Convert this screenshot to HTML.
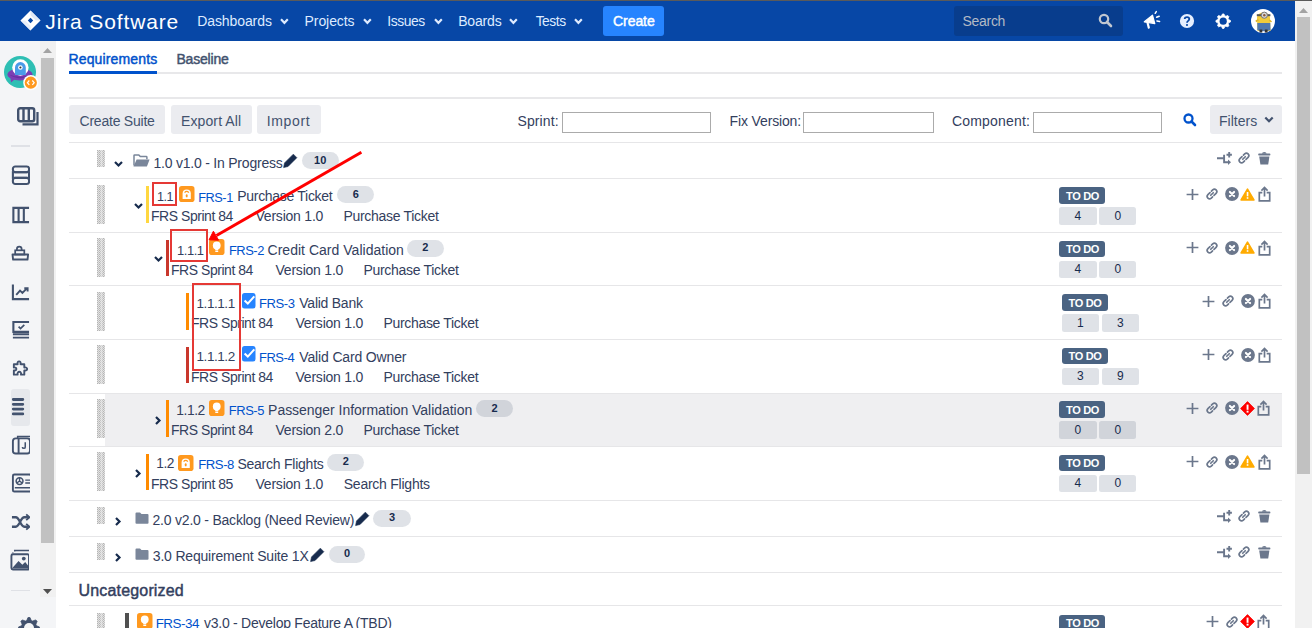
<!DOCTYPE html>
<html><head><meta charset="utf-8"><title>Requirements</title>
<style>
html,body{margin:0;padding:0;width:1312px;height:628px;overflow:hidden;background:#fff;position:relative}
.t{position:absolute;white-space:nowrap}
svg{overflow:visible}
</style></head><body>
<div style="position:absolute;left:0px;top:0px;width:1312px;height:1px;background:#5a5a5a;"></div><div style="position:absolute;left:0px;top:1px;width:1295px;height:40px;background:#0747a6;"></div><div style="position:absolute;left:1295px;top:1px;width:17px;height:627px;background:#f1f1f1;"></div><div style="position:absolute;left:1297px;top:17px;width:13px;height:457px;background:#c1c1c1;"></div><svg style="position:absolute;left:1298px;top:6px;" width="11" height="8" viewBox="0 0 11 8"><path d="M1 7 L5.5 2 L10 7 Z" fill="#a3a3a3"/></svg><div style="position:absolute;left:0px;top:41px;width:56px;height:587px;background:#f4f5f7;"></div><div style="position:absolute;left:40px;top:41px;width:16px;height:556px;background:#f1f1f1;"></div><div style="position:absolute;left:41px;top:58px;width:13px;height:485px;background:#c1c1c1;"></div><svg style="position:absolute;left:42px;top:46px;" width="11" height="8" viewBox="0 0 11 8"><path d="M1 7 L5.5 2 L10 7 Z" fill="#a3a3a3"/></svg><svg style="position:absolute;left:42px;top:588px;" width="11" height="8" viewBox="0 0 11 8"><path d="M1 1 L5.5 6 L10 1 Z" fill="#505050"/></svg><svg style="position:absolute;left:20px;top:10px;" width="21" height="21" viewBox="0 0 21 21"><path d="M10.5 0.5 L20.5 10.5 L10.5 20.5 L0.5 10.5 Z" fill="#fff"/><path d="M10.5 7.8 L13.2 10.5 L10.5 13.2 L7.8 10.5 Z" fill="#0747a6"/><path d="M10.5 0.5 L20.5 10.5 L15.8 10.5 L10.5 5.2 Z" fill="#dfe8f6"/><path d="M10.5 20.5 L0.5 10.5 L5.2 10.5 L10.5 15.8 Z" fill="#e8eef8"/></svg><svg style="position:absolute;left:279.6px;top:18px;" width="9" height="7" viewBox="0 0 9 7"><path d="M1 1.3 L4.4 4.8 L7.8 1.3" stroke="#deebff" stroke-width="2.2" fill="none"/></svg><svg style="position:absolute;left:362.9px;top:18px;" width="9" height="7" viewBox="0 0 9 7"><path d="M1 1.3 L4.4 4.8 L7.8 1.3" stroke="#deebff" stroke-width="2.2" fill="none"/></svg><svg style="position:absolute;left:433.5px;top:18px;" width="9" height="7" viewBox="0 0 9 7"><path d="M1 1.3 L4.4 4.8 L7.8 1.3" stroke="#deebff" stroke-width="2.2" fill="none"/></svg><svg style="position:absolute;left:509.2px;top:18px;" width="9" height="7" viewBox="0 0 9 7"><path d="M1 1.3 L4.4 4.8 L7.8 1.3" stroke="#deebff" stroke-width="2.2" fill="none"/></svg><svg style="position:absolute;left:574.2px;top:18px;" width="9" height="7" viewBox="0 0 9 7"><path d="M1 1.3 L4.4 4.8 L7.8 1.3" stroke="#deebff" stroke-width="2.2" fill="none"/></svg><div style="position:absolute;left:603px;top:6px;width:61px;height:30px;background:#2684ff;border-radius:3px"></div><div style="position:absolute;left:954px;top:6px;width:169px;height:30px;background:#083d8d;border-radius:3px"></div><svg style="position:absolute;left:1098px;top:13px;" width="15" height="15" viewBox="0 0 15 15"><circle cx="6" cy="6" r="4.2" stroke="#c1c7d0" stroke-width="2.2" fill="none"/><path d="M9 9 L13 13" stroke="#c1c7d0" stroke-width="2.6" stroke-linecap="round"/></svg><svg style="position:absolute;left:1142px;top:10px;" width="20" height="20" viewBox="0 0 20 20"><path d="M2.3 11.8 L10.5 5.2 L12.8 13.6 Z" fill="#fff" stroke="#fff" stroke-width="1.2" stroke-linejoin="round"/><path d="M5.6 13 L6.8 17.6" stroke="#fff" stroke-width="2.2" stroke-linecap="round"/><path d="M13.2 3.3 L14.3 1.6 M14.6 7.3 L17.2 6.2 M14.9 10.9 L17.6 11.4" stroke="#fff" stroke-width="1.5" stroke-linecap="round"/></svg><svg style="position:absolute;left:1179.2px;top:12.8px;" width="16" height="16" viewBox="0 0 16 16"><circle cx="8" cy="8" r="7.1" fill="#e6efff"/><path d="M5.7 6.1 C5.7 3.4 10.3 3.4 10.3 6.1 C10.3 7.9 8 7.8 8 9.7" stroke="#0747a6" stroke-width="1.8" fill="none"/><circle cx="8" cy="12" r="1.05" fill="#0747a6"/></svg><svg style="position:absolute;left:1215px;top:12.6px;" width="17" height="17" viewBox="0 0 17 17"><polygon points="15.46,7.48 15.46,8.92 13.56,9.83 13.14,10.84 13.84,12.83 12.83,13.84 10.84,13.14 9.83,13.56 8.92,15.46 7.48,15.46 6.57,13.56 5.56,13.14 3.57,13.84 2.56,12.83 3.26,10.84 2.84,9.83 0.94,8.92 0.94,7.48 2.84,6.57 3.26,5.56 2.56,3.57 3.57,2.56 5.56,3.26 6.57,2.84 7.48,0.94 8.92,0.94 9.83,2.84 10.84,3.26 12.83,2.56 13.84,3.57 13.14,5.56 13.56,6.57" fill="#fff" stroke="#fff" stroke-width="0.8" stroke-linejoin="round"/><circle cx="8.2" cy="8.2" r="3.6" fill="#0747a6"/></svg><svg style="position:absolute;left:1251px;top:8.8px;" width="25" height="25" viewBox="0 0 25 25"><circle cx="12" cy="12" r="12" fill="#fff"/><path d="M6.5 22 L6 9 C6 1.5 19 1.5 19 9 L19.5 22 Z" fill="#f2cb3a"/><path d="M6.3 14 H19.3 L19.5 21 Q12.8 23.5 6.3 21 Z" fill="#4f78b0"/><rect x="8.5" y="20.5" width="2.8" height="3" fill="#333"/><rect x="13.8" y="20.5" width="2.8" height="3" fill="#333"/><path d="M4.8 12.5 L7.5 10.5 M20.5 13 L18.3 11" stroke="#e0b52e" stroke-width="1.6"/><rect x="5.8" y="5.2" width="13.6" height="2" fill="#555"/><circle cx="13.3" cy="6.2" r="3.1" fill="#d8d8d8" stroke="#777" stroke-width="1"/><circle cx="13.3" cy="6.2" r="1.2" fill="#8a5a3a"/></svg><svg style="position:absolute;left:4px;top:56px;" width="33" height="33" viewBox="0 0 33 33"><circle cx="16" cy="16" r="16" fill="#2ebfb4"/><ellipse cx="16" cy="18.5" rx="12.5" ry="6" fill="#7b3fb5"/><path d="M6.5 21 L7 26.5 L10.5 23.5Z" fill="#7b3fb5"/><circle cx="16.4" cy="11.5" r="8.2" fill="#fff"/><path d="M11 19 V11.5 A5.4 5.4 0 0 1 21.8 11.5 V19 Z" fill="#4a9be8"/><circle cx="16.4" cy="11.5" r="2.3" fill="#fff"/><circle cx="16.4" cy="11.5" r="1.1" fill="#333"/><path d="M5 18.5 Q16 26 28 18.5 Q16 23 5 18.5Z" fill="#6a2fa0"/><circle cx="26.8" cy="26.7" r="7.6" fill="#fff"/><circle cx="26.8" cy="26.7" r="6.1" fill="#ff991f"/><path d="M25.3 24.5 L23.4 26.7 L25.3 28.9 M28.3 24.5 L30.2 26.7 L28.3 28.9" stroke="#fff" stroke-width="1.2" fill="none"/></svg><svg style="position:absolute;left:17px;top:107px;" width="23" height="19" viewBox="0 0 23 19"><rect x="1.2" y="1.2" width="16" height="13" rx="2" stroke="#42526e" stroke-width="2.4" fill="none"/><path d="M6.5 1 V14 M11.8 1 V14" stroke="#42526e" stroke-width="2.4"/><path d="M20.5 5 V17.3 H5.5" stroke="#42526e" stroke-width="2.2" fill="none"/></svg><div style="position:absolute;left:11px;top:145px;width:19px;height:2px;background:#dfe1e6;"></div><svg style="position:absolute;left:11px;top:165px;clip-path:inset(0 -2px 0 0);overflow:hidden;width:19px" width="20" height="21" viewBox="0 0 20 21"><rect x="2" y="1" width="17" height="6" rx="2.5" stroke="#42526e" stroke-width="2.2" fill="none"/><rect x="2" y="7" width="17" height="6" stroke="#42526e" stroke-width="2.2" fill="none"/><rect x="2" y="13" width="17" height="6.5" rx="2.5" stroke="#42526e" stroke-width="2.2" fill="none"/></svg><svg style="position:absolute;left:11px;top:206px;clip-path:inset(0 -2px 0 0);overflow:hidden;width:19px" width="20" height="18" viewBox="0 0 20 18"><path d="M19 1.5 H2.5 V16.5 H19" stroke="#42526e" stroke-width="2.2" fill="none"/><path d="M8 1.5 V16.5 M13.5 1.5 V16.5" stroke="#42526e" stroke-width="2.2"/></svg><svg style="position:absolute;left:11px;top:243px;clip-path:inset(0 -2px 0 0);overflow:hidden;width:19px" width="20" height="19" viewBox="0 0 20 19"><path d="M6.2 7 V5.8 A2.5 2.5 0 0 1 11.2 5.8 V7" stroke="#42526e" stroke-width="1.8" fill="none"/><rect x="4.4" y="7.2" width="9.6" height="4.4" stroke="#42526e" stroke-width="1.8" fill="none"/><path d="M1.6 11.6 H18 L17.4 16.9 H2.2 Z" stroke="#42526e" stroke-width="2" fill="none" stroke-linejoin="round"/></svg><svg style="position:absolute;left:11px;top:283px;clip-path:inset(0 -2px 0 0);overflow:hidden;width:19px" width="20" height="18" viewBox="0 0 20 18"><path d="M2 1 V16.5 H19" stroke="#42526e" stroke-width="2.2" fill="none"/><path d="M5.5 12 L9.5 7.5 L12 10 L17 5 M14 5 H17.5 V8.5" stroke="#42526e" stroke-width="2" fill="none"/></svg><svg style="position:absolute;left:11px;top:320px;clip-path:inset(0 -2px 0 0);overflow:hidden;width:19px" width="20" height="20" viewBox="0 0 20 20"><path d="M19 1.5 H2.5 V12 H19" stroke="#42526e" stroke-width="2.2" fill="none"/><path d="M8 6.5 L10 8.5 L14 4.5" stroke="#42526e" stroke-width="1.8" fill="none"/><path d="M2 14.5 H19 M2 18 H19" stroke="#42526e" stroke-width="2"/></svg><svg style="position:absolute;left:11px;top:358px;clip-path:inset(0 -2px 0 0);overflow:hidden;width:19px" width="20" height="20" viewBox="0 0 20 20"><path d="M3 6 H7 C6 2 11 2 10 6 H14 V9.5 C18 8.5 18 13.5 14 12.5 V17 H10.5 C11.5 13 6 13 7 17 H3 V12.5 C6.5 13.5 6.5 8.5 3 9.5 Z" stroke="#42526e" stroke-width="2" fill="none" stroke-linejoin="round"/></svg><div style="position:absolute;left:10.6px;top:389px;width:19px;height:37px;background:#e6e8ec;border-radius:3px"></div><svg style="position:absolute;left:12px;top:397px;" width="15" height="21" viewBox="0 0 15 21"><path d="M1.3 2.5 H10.8 M1.3 7.3 H10.8 M1.3 12.1 H10.8 M1.3 16.9 H10.8" stroke="#42526e" stroke-width="2.8" stroke-linecap="round"/></svg><svg style="position:absolute;left:11px;top:434px;clip-path:inset(0 -2px 0 0);overflow:hidden;width:19px" width="20" height="22" viewBox="0 0 20 22"><rect x="2" y="4" width="18" height="16" rx="3" stroke="#42526e" stroke-width="2" fill="none"/><path d="M7 4 V2 H20" stroke="#42526e" stroke-width="1.6" fill="none"/><path d="M8 4 V20" stroke="#42526e" stroke-width="2"/><path d="M15 8 V13 C15 15 12 15 12 13" stroke="#42526e" stroke-width="1.6" fill="none"/></svg><svg style="position:absolute;left:11px;top:472px;clip-path:inset(0 -2px 0 0);overflow:hidden;width:19px" width="20" height="22" viewBox="0 0 20 22"><rect x="2" y="2" width="19" height="18" rx="1.5" stroke="#42526e" stroke-width="2" fill="none"/><circle cx="9" cy="9" r="3.6" stroke="#42526e" stroke-width="1.6" fill="none"/><path d="M9 5.5 V9 L6 11 M9 9 L12 11" stroke="#42526e" stroke-width="1.4" fill="none"/><path d="M4 16 H20" stroke="#42526e" stroke-width="1.6"/><path d="M15 8 H20 M15 11 H20" stroke="#42526e" stroke-width="1.4"/></svg><svg style="position:absolute;left:11px;top:512px;clip-path:inset(0 -2px 0 0);overflow:hidden;width:19px" width="20" height="20" viewBox="0 0 20 20"><path d="M1 5 H5 C9 5 10 15 14 15 H19 M1 15 H5 C9 15 10 5 14 5 H19" stroke="#42526e" stroke-width="2.4" fill="none"/><path d="M16 2 L19.5 5 L16 8 M16 12 L19.5 15 L16 18" stroke="#42526e" stroke-width="2" fill="none"/></svg><svg style="position:absolute;left:10px;top:548px;clip-path:inset(0 -2px 0 0);overflow:hidden;width:19px" width="20" height="24" viewBox="0 0 20 24"><path d="M5 3 V2 H20 M3 5 V4" stroke="#42526e" stroke-width="1.6" fill="none"/><rect x="1.5" y="6" width="18.5" height="16" rx="1.5" stroke="#42526e" stroke-width="2" fill="none"/><path d="M2 21 L9 13 L13 17 L16 14 L20 19 V21 Z" fill="#42526e"/><circle cx="14.5" cy="10.5" r="2" fill="#42526e"/></svg><div style="position:absolute;left:11px;top:590px;width:19px;height:1px;background:#dfe1e6;"></div><svg style="position:absolute;left:16.5px;top:616px;" width="24" height="24" viewBox="0 0 24 24"><polygon points="22.45,10.97 22.45,13.03 19.46,14.26 18.88,15.68 20.12,18.66 18.66,20.12 15.68,18.88 14.26,19.46 13.03,22.45 10.97,22.45 9.74,19.46 8.32,18.88 5.34,20.12 3.88,18.66 5.12,15.68 4.54,14.26 1.55,13.03 1.55,10.97 4.54,9.74 5.12,8.32 3.88,5.34 5.34,3.88 8.32,5.12 9.74,4.54 10.97,1.55 13.03,1.55 14.26,4.54 15.68,5.12 18.66,3.88 20.12,5.34 18.88,8.32 19.46,9.74" fill="#42526e" stroke="#42526e" stroke-width="0.8" stroke-linejoin="round"/><circle cx="12" cy="12" r="5" fill="#f4f5f7"/></svg><div style="position:absolute;left:69px;top:72px;width:1213px;height:2px;background:#e8e8ea;"></div><div style="position:absolute;left:69px;top:71px;width:88px;height:3px;background:#0052cc;"></div><div style="position:absolute;left:69px;top:97px;width:1213px;height:2px;background:#e8e8ea;"></div><div style="position:absolute;left:69px;top:105px;width:96px;height:29px;background:#ebecf0;border-radius:3px"></div><div style="position:absolute;left:171px;top:105px;width:81px;height:29px;background:#ebecf0;border-radius:3px"></div><div style="position:absolute;left:257px;top:105px;width:64px;height:29px;background:#ebecf0;border-radius:3px"></div><div style="position:absolute;left:561.5px;top:111.5px;width:149.5px;height:21.5px;background:#fff;border:1px solid #ababab;box-sizing:border-box"></div><div style="position:absolute;left:803.3px;top:111.5px;width:130.5px;height:21.5px;background:#fff;border:1px solid #ababab;box-sizing:border-box"></div><div style="position:absolute;left:1032.8px;top:111.5px;width:129.5px;height:21.5px;background:#fff;border:1px solid #ababab;box-sizing:border-box"></div><svg style="position:absolute;left:1182px;top:113px;" width="15" height="13" viewBox="0 0 15 13"><circle cx="6.5" cy="5.5" r="4" stroke="#0052cc" stroke-width="2.3" fill="none"/><path d="M9.5 8.5 L13 12" stroke="#0052cc" stroke-width="2.6" stroke-linecap="round"/></svg><div style="position:absolute;left:1210px;top:105px;width:72px;height:29px;background:#ebecf0;border-radius:3px"></div><svg style="position:absolute;left:1264px;top:116px;" width="10" height="8" viewBox="0 0 10 8"><path d="M1.3 1.5 L5 5.2 L8.7 1.5" stroke="#42526e" stroke-width="2.2" fill="none"/></svg><div style="position:absolute;left:69px;top:142px;width:1213px;height:1px;background:#e6e6e8;"></div><svg style="position:absolute;left:97px;top:149.5px;" width="8" height="17" viewBox="0 0 8 17"><defs><pattern id="dp" width="2" height="2" patternUnits="userSpaceOnUse"><rect width="2" height="2" fill="#e2e2e2"/><rect width="1" height="1" fill="#b4b4b4"/><rect x="1" y="1" width="1" height="1" fill="#c4c4c4"/></pattern></defs><rect width="8" height="17" fill="url(#dp)"/><rect x="4" width="0.6" height="17" fill="#f0f0f0"/></svg><svg style="position:absolute;left:113.8px;top:161.0px;" width="9" height="6" viewBox="0 0 9 6"><path d="M1 1 L4.5 4.5 L8 1" stroke="#172b4d" stroke-width="2.2" fill="none"/></svg><svg style="position:absolute;left:133.2px;top:153.5px;" width="17" height="13" viewBox="0 0 17 13"><path d="M1 11.5 V1.6 Q1 1 1.6 1 H5.8 L7.3 2.6 H13.2 Q13.9 2.6 13.9 3.3 V5.2" stroke="#7a869a" stroke-width="1.5" fill="none"/><path d="M3.6 5.6 H16.6 L13.9 12.4 H0.5 Z" fill="#7a869a"/></svg><svg style="position:absolute;left:283.2px;top:154.0px;" width="15" height="14" viewBox="0 0 15 14"><path d="M0.6 13.6 L1.5 8.96 L10.33 0.13 L13.87 3.67 L5.04 12.5 Z" fill="#172b4d" stroke="#172b4d" stroke-width="0.6" stroke-linejoin="round"/></svg><div style="position:absolute;left:301.7px;top:152.0px;width:37px;height:17px;background:rgba(9,30,66,0.13);border-radius:8.5px"></div><div style="position:absolute;left:301.7px;top:151.5px;width:37px;height:17px;line-height:17px;text-align:center;font-family:'Liberation Sans', sans-serif;font-size:11px;font-weight:700;color:#172b4d;white-space:nowrap">10</div><svg style="position:absolute;left:1217px;top:152.2px;" width="15" height="13" viewBox="0 0 15 13"><path d="M0 6.3 H7.2 M7.1 2.8 V10.2 H12" stroke="#6b778c" stroke-width="1.9" fill="none"/><path d="M11 7.4 L14 10.2 L11 13 Z" fill="#6b778c"/><path d="M12.2 0 V5.4 M9.5 2.7 H14.9" stroke="#6b778c" stroke-width="1.9"/></svg><svg style="position:absolute;left:1237px;top:151.2px;" width="14" height="14" viewBox="0 0 14 14"><g transform="rotate(-45 7 7)" fill="none" stroke="#6b778c" stroke-width="1.65" stroke-linecap="round"><path d="M6.6 4.6 H3.6 A2.4 2.4 0 0 0 3.6 9.4 H5.4"/><path d="M7.4 9.4 H10.4 A2.4 2.4 0 0 0 10.4 4.6 H8.6"/><path d="M5.2 7 H8.8"/></g></svg><svg style="position:absolute;left:1257.8px;top:152.2px;" width="13" height="13" viewBox="0 0 13 13"><rect x="0.2" y="1.6" width="12.2" height="2" rx="0.8" fill="#6b778c"/><path d="M4 1.8 Q4 0 6.3 0 Q8.6 0 8.6 1.8 Z" fill="#6b778c"/><path d="M1.2 4.4 H11.4 L10.2 12.4 H2.4 Z" fill="#6b778c"/></svg><div style="position:absolute;left:69px;top:178px;width:1213px;height:1px;background:#e6e6e8;"></div><svg style="position:absolute;left:97px;top:184.5px;" width="8" height="39" viewBox="0 0 8 39"><defs><pattern id="dp" width="2" height="2" patternUnits="userSpaceOnUse"><rect width="2" height="2" fill="#e2e2e2"/><rect width="1" height="1" fill="#b4b4b4"/><rect x="1" y="1" width="1" height="1" fill="#c4c4c4"/></pattern></defs><rect width="8" height="39" fill="url(#dp)"/><rect x="4" width="0.6" height="39" fill="#f0f0f0"/></svg><svg style="position:absolute;left:133.5px;top:202.5px;" width="9" height="6" viewBox="0 0 9 6"><path d="M1 1 L4.5 4.5 L8 1" stroke="#172b4d" stroke-width="2.2" fill="none"/></svg><div style="position:absolute;left:145.6px;top:186px;width:3.4px;height:36.5px;background:#ffd740;"></div><svg style="position:absolute;left:178.9px;top:185.5px;" width="15.5" height="16" viewBox="0 0 15.5 16"><rect x="0" y="0" width="15.5" height="16" rx="2.8" fill="#ff991f"/><path d="M3.6 13 V7.5 A4.1 4.1 0 0 1 11.8 7.5 V13 Z" fill="#fff"/><path d="M5.6 6.6 Q7.7 4.3 9.8 6.6" stroke="#ff991f" stroke-width="1.3" fill="none"/><rect x="6.8" y="8.3" width="1.8" height="3" rx="0.9" fill="#ff991f"/></svg><div style="position:absolute;left:337.2px;top:186.3px;width:37px;height:17px;background:rgba(9,30,66,0.13);border-radius:8.5px"></div><div style="position:absolute;left:337.2px;top:185.8px;width:37px;height:17px;line-height:17px;text-align:center;font-family:'Liberation Sans', sans-serif;font-size:11px;font-weight:700;color:#172b4d;white-space:nowrap">6</div><div style="position:absolute;left:1059.2px;top:187.4px;width:46px;height:16.5px;background:#4a6382;border-radius:3px"></div><div style="position:absolute;left:1059px;top:207px;width:37.5px;height:17.5px;background:rgba(9,30,66,0.13);border-radius:2.5px"></div><div style="position:absolute;left:1099.3px;top:207px;width:37.2px;height:17.5px;background:rgba(9,30,66,0.13);border-radius:2.5px"></div><div style="position:absolute;left:1059px;top:207.5px;width:37.5px;height:17.5px;line-height:17.5px;text-align:center;font-family:'Liberation Sans', sans-serif;font-size:12px;font-weight:400;color:#172b4d;white-space:nowrap">4</div><div style="position:absolute;left:1099.3px;top:207.5px;width:37.2px;height:17.5px;line-height:17.5px;text-align:center;font-family:'Liberation Sans', sans-serif;font-size:12px;font-weight:400;color:#172b4d;white-space:nowrap">0</div><svg style="position:absolute;left:1185.7px;top:187.7px;" width="13" height="13" viewBox="0 0 13 13"><path d="M6.5 1 V12 M0.6 6.5 H12.4" stroke="#6b778c" stroke-width="1.7"/></svg><svg style="position:absolute;left:1204.9px;top:187.2px;" width="14" height="14" viewBox="0 0 14 14"><g transform="rotate(-45 7 7)" fill="none" stroke="#6b778c" stroke-width="1.65" stroke-linecap="round"><path d="M6.6 4.6 H3.6 A2.4 2.4 0 0 0 3.6 9.4 H5.4"/><path d="M7.4 9.4 H10.4 A2.4 2.4 0 0 0 10.4 4.6 H8.6"/><path d="M5.2 7 H8.8"/></g></svg><svg style="position:absolute;left:1224.8px;top:187.2px;" width="14" height="14" viewBox="0 0 14 14"><circle cx="7" cy="7" r="6.9" fill="#6b778c"/><path d="M4.9 4.9 L9.1 9.1 M9.1 4.9 L4.9 9.1" stroke="#fff" stroke-width="2.1" stroke-linecap="round"/></svg><svg style="position:absolute;left:1240.2px;top:187.7px;" width="15" height="13" viewBox="0 0 15 13"><path d="M7.5 1.2 L13.9 12 H1.1 Z" fill="#ffab00" stroke="#ffab00" stroke-width="1.6" stroke-linejoin="round"/><rect x="6.75" y="4" width="1.6" height="4.3" fill="#fff"/><rect x="6.75" y="9.2" width="1.6" height="1.6" fill="#fff"/></svg><svg style="position:absolute;left:1257.5px;top:186.2px;" width="13" height="16" viewBox="0 0 13 16"><path d="M4.3 6.6 H1.3 V14.8 H11.7 V6.6 H8.7" stroke="#6b778c" stroke-width="1.7" fill="none"/><path d="M6.5 10.6 V1.8 M3.4 4.6 L6.5 1.5 L9.6 4.6" stroke="#6b778c" stroke-width="1.7" fill="none"/></svg><div style="position:absolute;left:69px;top:232px;width:1213px;height:1px;background:#e6e6e8;"></div><svg style="position:absolute;left:97px;top:238.0px;" width="8" height="39" viewBox="0 0 8 39"><defs><pattern id="dp" width="2" height="2" patternUnits="userSpaceOnUse"><rect width="2" height="2" fill="#e2e2e2"/><rect width="1" height="1" fill="#b4b4b4"/><rect x="1" y="1" width="1" height="1" fill="#c4c4c4"/></pattern></defs><rect width="8" height="39" fill="url(#dp)"/><rect x="4" width="0.6" height="39" fill="#f0f0f0"/></svg><svg style="position:absolute;left:153.5px;top:256.0px;" width="9" height="6" viewBox="0 0 9 6"><path d="M1 1 L4.5 4.5 L8 1" stroke="#172b4d" stroke-width="2.2" fill="none"/></svg><div style="position:absolute;left:165.6px;top:239.5px;width:3.4px;height:36.5px;background:#c9372c;"></div><svg style="position:absolute;left:209.3px;top:239.0px;" width="15.5" height="16" viewBox="0 0 15.5 16"><rect x="0" y="0" width="15.5" height="16" rx="2.8" fill="#ff991f"/><circle cx="7.75" cy="6.4" r="3.9" fill="#fff"/><path d="M5.9 8.6 H9.6 L9.1 11.4 H6.4 Z" fill="#fff"/><rect x="6.3" y="11.9" width="2.9" height="1.1" fill="#fff"/></svg><div style="position:absolute;left:406.9px;top:239.8px;width:37px;height:17px;background:rgba(9,30,66,0.13);border-radius:8.5px"></div><div style="position:absolute;left:406.9px;top:239.3px;width:37px;height:17px;line-height:17px;text-align:center;font-family:'Liberation Sans', sans-serif;font-size:11px;font-weight:700;color:#172b4d;white-space:nowrap">2</div><div style="position:absolute;left:1059.2px;top:240.9px;width:46px;height:16.5px;background:#4a6382;border-radius:3px"></div><div style="position:absolute;left:1059px;top:260.5px;width:37.5px;height:17.5px;background:rgba(9,30,66,0.13);border-radius:2.5px"></div><div style="position:absolute;left:1099.3px;top:260.5px;width:37.2px;height:17.5px;background:rgba(9,30,66,0.13);border-radius:2.5px"></div><div style="position:absolute;left:1059px;top:261.0px;width:37.5px;height:17.5px;line-height:17.5px;text-align:center;font-family:'Liberation Sans', sans-serif;font-size:12px;font-weight:400;color:#172b4d;white-space:nowrap">4</div><div style="position:absolute;left:1099.3px;top:261.0px;width:37.2px;height:17.5px;line-height:17.5px;text-align:center;font-family:'Liberation Sans', sans-serif;font-size:12px;font-weight:400;color:#172b4d;white-space:nowrap">0</div><svg style="position:absolute;left:1185.7px;top:241.2px;" width="13" height="13" viewBox="0 0 13 13"><path d="M6.5 1 V12 M0.6 6.5 H12.4" stroke="#6b778c" stroke-width="1.7"/></svg><svg style="position:absolute;left:1204.9px;top:240.7px;" width="14" height="14" viewBox="0 0 14 14"><g transform="rotate(-45 7 7)" fill="none" stroke="#6b778c" stroke-width="1.65" stroke-linecap="round"><path d="M6.6 4.6 H3.6 A2.4 2.4 0 0 0 3.6 9.4 H5.4"/><path d="M7.4 9.4 H10.4 A2.4 2.4 0 0 0 10.4 4.6 H8.6"/><path d="M5.2 7 H8.8"/></g></svg><svg style="position:absolute;left:1224.8px;top:240.7px;" width="14" height="14" viewBox="0 0 14 14"><circle cx="7" cy="7" r="6.9" fill="#6b778c"/><path d="M4.9 4.9 L9.1 9.1 M9.1 4.9 L4.9 9.1" stroke="#fff" stroke-width="2.1" stroke-linecap="round"/></svg><svg style="position:absolute;left:1240.2px;top:241.2px;" width="15" height="13" viewBox="0 0 15 13"><path d="M7.5 1.2 L13.9 12 H1.1 Z" fill="#ffab00" stroke="#ffab00" stroke-width="1.6" stroke-linejoin="round"/><rect x="6.75" y="4" width="1.6" height="4.3" fill="#fff"/><rect x="6.75" y="9.2" width="1.6" height="1.6" fill="#fff"/></svg><svg style="position:absolute;left:1257.5px;top:239.7px;" width="13" height="16" viewBox="0 0 13 16"><path d="M4.3 6.6 H1.3 V14.8 H11.7 V6.6 H8.7" stroke="#6b778c" stroke-width="1.7" fill="none"/><path d="M6.5 10.6 V1.8 M3.4 4.6 L6.5 1.5 L9.6 4.6" stroke="#6b778c" stroke-width="1.7" fill="none"/></svg><div style="position:absolute;left:69px;top:285px;width:1213px;height:1px;background:#e6e6e8;"></div><svg style="position:absolute;left:97px;top:291.5px;" width="8" height="39" viewBox="0 0 8 39"><defs><pattern id="dp" width="2" height="2" patternUnits="userSpaceOnUse"><rect width="2" height="2" fill="#e2e2e2"/><rect width="1" height="1" fill="#b4b4b4"/><rect x="1" y="1" width="1" height="1" fill="#c4c4c4"/></pattern></defs><rect width="8" height="39" fill="url(#dp)"/><rect x="4" width="0.6" height="39" fill="#f0f0f0"/></svg><div style="position:absolute;left:185.6px;top:293px;width:3.4px;height:36.5px;background:#ff8b00;"></div><svg style="position:absolute;left:241.7px;top:292.7px;" width="14" height="15.5" viewBox="0 0 14 15.5"><rect x="0" y="0" width="13.5" height="15.4" rx="2.5" fill="#2684ff"/><path d="M2.6 7.6 L5.8 10.6 L12.3 3.4" stroke="#fff" stroke-width="2.1" fill="none"/></svg><div style="position:absolute;left:1061.7px;top:294.4px;width:46px;height:16.5px;background:#4a6382;border-radius:3px"></div><div style="position:absolute;left:1061.5px;top:314px;width:37.5px;height:17.5px;background:rgba(9,30,66,0.13);border-radius:2.5px"></div><div style="position:absolute;left:1101.8px;top:314px;width:37.2px;height:17.5px;background:rgba(9,30,66,0.13);border-radius:2.5px"></div><div style="position:absolute;left:1061.5px;top:314.5px;width:37.5px;height:17.5px;line-height:17.5px;text-align:center;font-family:'Liberation Sans', sans-serif;font-size:12px;font-weight:400;color:#172b4d;white-space:nowrap">1</div><div style="position:absolute;left:1101.8px;top:314.5px;width:37.2px;height:17.5px;line-height:17.5px;text-align:center;font-family:'Liberation Sans', sans-serif;font-size:12px;font-weight:400;color:#172b4d;white-space:nowrap">3</div><svg style="position:absolute;left:1201.7px;top:294.7px;" width="13" height="13" viewBox="0 0 13 13"><path d="M6.5 1 V12 M0.6 6.5 H12.4" stroke="#6b778c" stroke-width="1.7"/></svg><svg style="position:absolute;left:1220.8px;top:294.2px;" width="14" height="14" viewBox="0 0 14 14"><g transform="rotate(-45 7 7)" fill="none" stroke="#6b778c" stroke-width="1.65" stroke-linecap="round"><path d="M6.6 4.6 H3.6 A2.4 2.4 0 0 0 3.6 9.4 H5.4"/><path d="M7.4 9.4 H10.4 A2.4 2.4 0 0 0 10.4 4.6 H8.6"/><path d="M5.2 7 H8.8"/></g></svg><svg style="position:absolute;left:1241px;top:294.2px;" width="14" height="14" viewBox="0 0 14 14"><circle cx="7" cy="7" r="6.9" fill="#6b778c"/><path d="M4.9 4.9 L9.1 9.1 M9.1 4.9 L4.9 9.1" stroke="#fff" stroke-width="2.1" stroke-linecap="round"/></svg><svg style="position:absolute;left:1257.5px;top:293.2px;" width="13" height="16" viewBox="0 0 13 16"><path d="M4.3 6.6 H1.3 V14.8 H11.7 V6.6 H8.7" stroke="#6b778c" stroke-width="1.7" fill="none"/><path d="M6.5 10.6 V1.8 M3.4 4.6 L6.5 1.5 L9.6 4.6" stroke="#6b778c" stroke-width="1.7" fill="none"/></svg><div style="position:absolute;left:69px;top:339px;width:1213px;height:1px;background:#e6e6e8;"></div><svg style="position:absolute;left:97px;top:345.0px;" width="8" height="39" viewBox="0 0 8 39"><defs><pattern id="dp" width="2" height="2" patternUnits="userSpaceOnUse"><rect width="2" height="2" fill="#e2e2e2"/><rect width="1" height="1" fill="#b4b4b4"/><rect x="1" y="1" width="1" height="1" fill="#c4c4c4"/></pattern></defs><rect width="8" height="39" fill="url(#dp)"/><rect x="4" width="0.6" height="39" fill="#f0f0f0"/></svg><div style="position:absolute;left:185.6px;top:346.5px;width:3.4px;height:36.5px;background:#c9372c;"></div><svg style="position:absolute;left:241.7px;top:346.2px;" width="14" height="15.5" viewBox="0 0 14 15.5"><rect x="0" y="0" width="13.5" height="15.4" rx="2.5" fill="#2684ff"/><path d="M2.6 7.6 L5.8 10.6 L12.3 3.4" stroke="#fff" stroke-width="2.1" fill="none"/></svg><div style="position:absolute;left:1061.7px;top:347.9px;width:46px;height:16.5px;background:#4a6382;border-radius:3px"></div><div style="position:absolute;left:1061.5px;top:367.5px;width:37.5px;height:17.5px;background:rgba(9,30,66,0.13);border-radius:2.5px"></div><div style="position:absolute;left:1101.8px;top:367.5px;width:37.2px;height:17.5px;background:rgba(9,30,66,0.13);border-radius:2.5px"></div><div style="position:absolute;left:1061.5px;top:368.0px;width:37.5px;height:17.5px;line-height:17.5px;text-align:center;font-family:'Liberation Sans', sans-serif;font-size:12px;font-weight:400;color:#172b4d;white-space:nowrap">3</div><div style="position:absolute;left:1101.8px;top:368.0px;width:37.2px;height:17.5px;line-height:17.5px;text-align:center;font-family:'Liberation Sans', sans-serif;font-size:12px;font-weight:400;color:#172b4d;white-space:nowrap">9</div><svg style="position:absolute;left:1201.7px;top:348.2px;" width="13" height="13" viewBox="0 0 13 13"><path d="M6.5 1 V12 M0.6 6.5 H12.4" stroke="#6b778c" stroke-width="1.7"/></svg><svg style="position:absolute;left:1220.8px;top:347.7px;" width="14" height="14" viewBox="0 0 14 14"><g transform="rotate(-45 7 7)" fill="none" stroke="#6b778c" stroke-width="1.65" stroke-linecap="round"><path d="M6.6 4.6 H3.6 A2.4 2.4 0 0 0 3.6 9.4 H5.4"/><path d="M7.4 9.4 H10.4 A2.4 2.4 0 0 0 10.4 4.6 H8.6"/><path d="M5.2 7 H8.8"/></g></svg><svg style="position:absolute;left:1241px;top:347.7px;" width="14" height="14" viewBox="0 0 14 14"><circle cx="7" cy="7" r="6.9" fill="#6b778c"/><path d="M4.9 4.9 L9.1 9.1 M9.1 4.9 L4.9 9.1" stroke="#fff" stroke-width="2.1" stroke-linecap="round"/></svg><svg style="position:absolute;left:1257.5px;top:346.7px;" width="13" height="16" viewBox="0 0 13 16"><path d="M4.3 6.6 H1.3 V14.8 H11.7 V6.6 H8.7" stroke="#6b778c" stroke-width="1.7" fill="none"/><path d="M6.5 10.6 V1.8 M3.4 4.6 L6.5 1.5 L9.6 4.6" stroke="#6b778c" stroke-width="1.7" fill="none"/></svg><div style="position:absolute;left:69px;top:393px;width:1213px;height:1px;background:#e6e6e8;"></div><div style="position:absolute;left:105px;top:394px;width:1177px;height:52px;background:#efeff1;"></div><svg style="position:absolute;left:97px;top:398.5px;" width="8" height="39" viewBox="0 0 8 39"><defs><pattern id="dp" width="2" height="2" patternUnits="userSpaceOnUse"><rect width="2" height="2" fill="#e2e2e2"/><rect width="1" height="1" fill="#b4b4b4"/><rect x="1" y="1" width="1" height="1" fill="#c4c4c4"/></pattern></defs><rect width="8" height="39" fill="url(#dp)"/><rect x="4" width="0.6" height="39" fill="#f0f0f0"/></svg><svg style="position:absolute;left:154.8px;top:415.6px;" width="6" height="9" viewBox="0 0 6 9"><path d="M1 1 L4.5 4.5 L1 8" stroke="#172b4d" stroke-width="2.2" fill="none"/></svg><div style="position:absolute;left:165.6px;top:400px;width:3.4px;height:36.5px;background:#ff8b00;"></div><svg style="position:absolute;left:209px;top:400px;" width="15.5" height="16" viewBox="0 0 15.5 16"><rect x="0" y="0" width="15.5" height="16" rx="2.8" fill="#ff991f"/><circle cx="7.75" cy="6.4" r="3.9" fill="#fff"/><path d="M5.9 8.6 H9.6 L9.1 11.4 H6.4 Z" fill="#fff"/><rect x="6.3" y="11.9" width="2.9" height="1.1" fill="#fff"/></svg><div style="position:absolute;left:476px;top:400.3px;width:37px;height:17px;background:rgba(9,30,66,0.13);border-radius:8.5px"></div><div style="position:absolute;left:476px;top:399.8px;width:37px;height:17px;line-height:17px;text-align:center;font-family:'Liberation Sans', sans-serif;font-size:11px;font-weight:700;color:#172b4d;white-space:nowrap">2</div><div style="position:absolute;left:1059.2px;top:401.4px;width:46px;height:16.5px;background:#4a6382;border-radius:3px"></div><div style="position:absolute;left:1059px;top:421px;width:37.5px;height:17.5px;background:rgba(9,30,66,0.13);border-radius:2.5px"></div><div style="position:absolute;left:1099.3px;top:421px;width:37.2px;height:17.5px;background:rgba(9,30,66,0.13);border-radius:2.5px"></div><div style="position:absolute;left:1059px;top:421.5px;width:37.5px;height:17.5px;line-height:17.5px;text-align:center;font-family:'Liberation Sans', sans-serif;font-size:12px;font-weight:400;color:#172b4d;white-space:nowrap">0</div><div style="position:absolute;left:1099.3px;top:421.5px;width:37.2px;height:17.5px;line-height:17.5px;text-align:center;font-family:'Liberation Sans', sans-serif;font-size:12px;font-weight:400;color:#172b4d;white-space:nowrap">0</div><svg style="position:absolute;left:1185.7px;top:401.7px;" width="13" height="13" viewBox="0 0 13 13"><path d="M6.5 1 V12 M0.6 6.5 H12.4" stroke="#6b778c" stroke-width="1.7"/></svg><svg style="position:absolute;left:1205px;top:401.2px;" width="14" height="14" viewBox="0 0 14 14"><g transform="rotate(-45 7 7)" fill="none" stroke="#6b778c" stroke-width="1.65" stroke-linecap="round"><path d="M6.6 4.6 H3.6 A2.4 2.4 0 0 0 3.6 9.4 H5.4"/><path d="M7.4 9.4 H10.4 A2.4 2.4 0 0 0 10.4 4.6 H8.6"/><path d="M5.2 7 H8.8"/></g></svg><svg style="position:absolute;left:1224.9px;top:401.2px;" width="14" height="14" viewBox="0 0 14 14"><circle cx="7" cy="7" r="6.9" fill="#6b778c"/><path d="M4.9 4.9 L9.1 9.1 M9.1 4.9 L4.9 9.1" stroke="#fff" stroke-width="2.1" stroke-linecap="round"/></svg><svg style="position:absolute;left:1240.2px;top:400.7px;" width="15" height="15" viewBox="0 0 15 15"><path d="M7.5 0.6 L14.4 7.5 L7.5 14.4 L0.6 7.5 Z" fill="#ff0000" stroke="#ff0000" stroke-width="0.8" stroke-linejoin="round"/><rect x="6.6" y="3.6" width="1.9" height="5.2" fill="#fff"/><rect x="6.6" y="9.7" width="1.9" height="1.9" fill="#fff"/></svg><svg style="position:absolute;left:1257.1px;top:400.2px;" width="13" height="16" viewBox="0 0 13 16"><path d="M4.3 6.6 H1.3 V14.8 H11.7 V6.6 H8.7" stroke="#6b778c" stroke-width="1.7" fill="none"/><path d="M6.5 10.6 V1.8 M3.4 4.6 L6.5 1.5 L9.6 4.6" stroke="#6b778c" stroke-width="1.7" fill="none"/></svg><div style="position:absolute;left:69px;top:446px;width:1213px;height:1px;background:#e6e6e8;"></div><svg style="position:absolute;left:97px;top:452.0px;" width="8" height="39" viewBox="0 0 8 39"><defs><pattern id="dp" width="2" height="2" patternUnits="userSpaceOnUse"><rect width="2" height="2" fill="#e2e2e2"/><rect width="1" height="1" fill="#b4b4b4"/><rect x="1" y="1" width="1" height="1" fill="#c4c4c4"/></pattern></defs><rect width="8" height="39" fill="url(#dp)"/><rect x="4" width="0.6" height="39" fill="#f0f0f0"/></svg><svg style="position:absolute;left:134.8px;top:469.1px;" width="6" height="9" viewBox="0 0 6 9"><path d="M1 1 L4.5 4.5 L1 8" stroke="#172b4d" stroke-width="2.2" fill="none"/></svg><div style="position:absolute;left:145.6px;top:453.5px;width:3.4px;height:36.5px;background:#ff8b00;"></div><svg style="position:absolute;left:178.4px;top:454.7px;" width="15.5" height="16" viewBox="0 0 15.5 16"><rect x="0" y="0" width="15.5" height="16" rx="2.8" fill="#ff991f"/><path d="M3.6 13 V7.5 A4.1 4.1 0 0 1 11.8 7.5 V13 Z" fill="#fff"/><path d="M5.6 6.6 Q7.7 4.3 9.8 6.6" stroke="#ff991f" stroke-width="1.3" fill="none"/><rect x="6.8" y="8.3" width="1.8" height="3" rx="0.9" fill="#ff991f"/></svg><div style="position:absolute;left:327.4px;top:453.8px;width:37px;height:17px;background:rgba(9,30,66,0.13);border-radius:8.5px"></div><div style="position:absolute;left:327.4px;top:453.3px;width:37px;height:17px;line-height:17px;text-align:center;font-family:'Liberation Sans', sans-serif;font-size:11px;font-weight:700;color:#172b4d;white-space:nowrap">2</div><div style="position:absolute;left:1059.2px;top:454.9px;width:46px;height:16.5px;background:#4a6382;border-radius:3px"></div><div style="position:absolute;left:1059px;top:474.5px;width:37.5px;height:17.5px;background:rgba(9,30,66,0.13);border-radius:2.5px"></div><div style="position:absolute;left:1099.3px;top:474.5px;width:37.2px;height:17.5px;background:rgba(9,30,66,0.13);border-radius:2.5px"></div><div style="position:absolute;left:1059px;top:475.0px;width:37.5px;height:17.5px;line-height:17.5px;text-align:center;font-family:'Liberation Sans', sans-serif;font-size:12px;font-weight:400;color:#172b4d;white-space:nowrap">4</div><div style="position:absolute;left:1099.3px;top:475.0px;width:37.2px;height:17.5px;line-height:17.5px;text-align:center;font-family:'Liberation Sans', sans-serif;font-size:12px;font-weight:400;color:#172b4d;white-space:nowrap">0</div><svg style="position:absolute;left:1185.7px;top:455.2px;" width="13" height="13" viewBox="0 0 13 13"><path d="M6.5 1 V12 M0.6 6.5 H12.4" stroke="#6b778c" stroke-width="1.7"/></svg><svg style="position:absolute;left:1204.9px;top:454.7px;" width="14" height="14" viewBox="0 0 14 14"><g transform="rotate(-45 7 7)" fill="none" stroke="#6b778c" stroke-width="1.65" stroke-linecap="round"><path d="M6.6 4.6 H3.6 A2.4 2.4 0 0 0 3.6 9.4 H5.4"/><path d="M7.4 9.4 H10.4 A2.4 2.4 0 0 0 10.4 4.6 H8.6"/><path d="M5.2 7 H8.8"/></g></svg><svg style="position:absolute;left:1224.8px;top:454.7px;" width="14" height="14" viewBox="0 0 14 14"><circle cx="7" cy="7" r="6.9" fill="#6b778c"/><path d="M4.9 4.9 L9.1 9.1 M9.1 4.9 L4.9 9.1" stroke="#fff" stroke-width="2.1" stroke-linecap="round"/></svg><svg style="position:absolute;left:1240.2px;top:455.2px;" width="15" height="13" viewBox="0 0 15 13"><path d="M7.5 1.2 L13.9 12 H1.1 Z" fill="#ffab00" stroke="#ffab00" stroke-width="1.6" stroke-linejoin="round"/><rect x="6.75" y="4" width="1.6" height="4.3" fill="#fff"/><rect x="6.75" y="9.2" width="1.6" height="1.6" fill="#fff"/></svg><svg style="position:absolute;left:1257.5px;top:453.7px;" width="13" height="16" viewBox="0 0 13 16"><path d="M4.3 6.6 H1.3 V14.8 H11.7 V6.6 H8.7" stroke="#6b778c" stroke-width="1.7" fill="none"/><path d="M6.5 10.6 V1.8 M3.4 4.6 L6.5 1.5 L9.6 4.6" stroke="#6b778c" stroke-width="1.7" fill="none"/></svg><div style="position:absolute;left:69px;top:500px;width:1213px;height:1px;background:#e6e6e8;"></div><svg style="position:absolute;left:97px;top:507px;" width="8" height="17" viewBox="0 0 8 17"><defs><pattern id="dp" width="2" height="2" patternUnits="userSpaceOnUse"><rect width="2" height="2" fill="#e2e2e2"/><rect width="1" height="1" fill="#b4b4b4"/><rect x="1" y="1" width="1" height="1" fill="#c4c4c4"/></pattern></defs><rect width="8" height="17" fill="url(#dp)"/><rect x="4" width="0.6" height="17" fill="#f0f0f0"/></svg><svg style="position:absolute;left:114.5px;top:517px;" width="6" height="9" viewBox="0 0 6 9"><path d="M1 1 L4.5 4.5 L1 8" stroke="#172b4d" stroke-width="2.2" fill="none"/></svg><svg style="position:absolute;left:134.6px;top:512px;" width="14" height="12" viewBox="0 0 14 12"><path d="M0.5 1.5 Q0.5 0.5 1.5 0.5 H5 L6.5 2 H12.5 Q13.5 2 13.5 3 V11 Q13.5 11.8 12.5 11.8 H1.5 Q0.5 11.8 0.5 11 Z" fill="#7a869a"/></svg><svg style="position:absolute;left:355px;top:511.5px;" width="15" height="14" viewBox="0 0 15 14"><path d="M0.6 13.6 L1.5 8.96 L10.33 0.13 L13.87 3.67 L5.04 12.5 Z" fill="#172b4d" stroke="#172b4d" stroke-width="0.6" stroke-linejoin="round"/></svg><div style="position:absolute;left:373.4px;top:509.5px;width:37.3px;height:17px;background:rgba(9,30,66,0.13);border-radius:8.5px"></div><div style="position:absolute;left:373.4px;top:509.0px;width:37.3px;height:17px;line-height:17px;text-align:center;font-family:'Liberation Sans', sans-serif;font-size:11px;font-weight:700;color:#172b4d;white-space:nowrap">3</div><svg style="position:absolute;left:1217px;top:509.7px;" width="15" height="13" viewBox="0 0 15 13"><path d="M0 6.3 H7.2 M7.1 2.8 V10.2 H12" stroke="#6b778c" stroke-width="1.9" fill="none"/><path d="M11 7.4 L14 10.2 L11 13 Z" fill="#6b778c"/><path d="M12.2 0 V5.4 M9.5 2.7 H14.9" stroke="#6b778c" stroke-width="1.9"/></svg><svg style="position:absolute;left:1237px;top:508.70000000000005px;" width="14" height="14" viewBox="0 0 14 14"><g transform="rotate(-45 7 7)" fill="none" stroke="#6b778c" stroke-width="1.65" stroke-linecap="round"><path d="M6.6 4.6 H3.6 A2.4 2.4 0 0 0 3.6 9.4 H5.4"/><path d="M7.4 9.4 H10.4 A2.4 2.4 0 0 0 10.4 4.6 H8.6"/><path d="M5.2 7 H8.8"/></g></svg><svg style="position:absolute;left:1257.8px;top:509.7px;" width="13" height="13" viewBox="0 0 13 13"><rect x="0.2" y="1.6" width="12.2" height="2" rx="0.8" fill="#6b778c"/><path d="M4 1.8 Q4 0 6.3 0 Q8.6 0 8.6 1.8 Z" fill="#6b778c"/><path d="M1.2 4.4 H11.4 L10.2 12.4 H2.4 Z" fill="#6b778c"/></svg><div style="position:absolute;left:69px;top:536px;width:1213px;height:1px;background:#e6e6e8;"></div><svg style="position:absolute;left:97px;top:543px;" width="8" height="17" viewBox="0 0 8 17"><defs><pattern id="dp" width="2" height="2" patternUnits="userSpaceOnUse"><rect width="2" height="2" fill="#e2e2e2"/><rect width="1" height="1" fill="#b4b4b4"/><rect x="1" y="1" width="1" height="1" fill="#c4c4c4"/></pattern></defs><rect width="8" height="17" fill="url(#dp)"/><rect x="4" width="0.6" height="17" fill="#f0f0f0"/></svg><svg style="position:absolute;left:114.5px;top:553px;" width="6" height="9" viewBox="0 0 6 9"><path d="M1 1 L4.5 4.5 L1 8" stroke="#172b4d" stroke-width="2.2" fill="none"/></svg><svg style="position:absolute;left:134.6px;top:548px;" width="14" height="12" viewBox="0 0 14 12"><path d="M0.5 1.5 Q0.5 0.5 1.5 0.5 H5 L6.5 2 H12.5 Q13.5 2 13.5 3 V11 Q13.5 11.8 12.5 11.8 H1.5 Q0.5 11.8 0.5 11 Z" fill="#7a869a"/></svg><svg style="position:absolute;left:309.7px;top:547.5px;" width="15" height="14" viewBox="0 0 15 14"><path d="M0.6 13.6 L1.5 8.96 L10.33 0.13 L13.87 3.67 L5.04 12.5 Z" fill="#172b4d" stroke="#172b4d" stroke-width="0.6" stroke-linejoin="round"/></svg><div style="position:absolute;left:329px;top:545.5px;width:36.2px;height:17px;background:rgba(9,30,66,0.13);border-radius:8.5px"></div><div style="position:absolute;left:329px;top:545.0px;width:36.2px;height:17px;line-height:17px;text-align:center;font-family:'Liberation Sans', sans-serif;font-size:11px;font-weight:700;color:#172b4d;white-space:nowrap">0</div><svg style="position:absolute;left:1217px;top:545.7px;" width="15" height="13" viewBox="0 0 15 13"><path d="M0 6.3 H7.2 M7.1 2.8 V10.2 H12" stroke="#6b778c" stroke-width="1.9" fill="none"/><path d="M11 7.4 L14 10.2 L11 13 Z" fill="#6b778c"/><path d="M12.2 0 V5.4 M9.5 2.7 H14.9" stroke="#6b778c" stroke-width="1.9"/></svg><svg style="position:absolute;left:1237px;top:544.7px;" width="14" height="14" viewBox="0 0 14 14"><g transform="rotate(-45 7 7)" fill="none" stroke="#6b778c" stroke-width="1.65" stroke-linecap="round"><path d="M6.6 4.6 H3.6 A2.4 2.4 0 0 0 3.6 9.4 H5.4"/><path d="M7.4 9.4 H10.4 A2.4 2.4 0 0 0 10.4 4.6 H8.6"/><path d="M5.2 7 H8.8"/></g></svg><svg style="position:absolute;left:1257.8px;top:545.7px;" width="13" height="13" viewBox="0 0 13 13"><rect x="0.2" y="1.6" width="12.2" height="2" rx="0.8" fill="#6b778c"/><path d="M4 1.8 Q4 0 6.3 0 Q8.6 0 8.6 1.8 Z" fill="#6b778c"/><path d="M1.2 4.4 H11.4 L10.2 12.4 H2.4 Z" fill="#6b778c"/></svg><div style="position:absolute;left:69px;top:572px;width:1213px;height:1px;background:#e6e6e8;"></div><div style="position:absolute;left:69px;top:605px;width:1213px;height:1px;background:#e6e6e8;"></div><svg style="position:absolute;left:97px;top:612.5px;" width="8" height="20" viewBox="0 0 8 20"><defs><pattern id="dp" width="2" height="2" patternUnits="userSpaceOnUse"><rect width="2" height="2" fill="#e2e2e2"/><rect width="1" height="1" fill="#b4b4b4"/><rect x="1" y="1" width="1" height="1" fill="#c4c4c4"/></pattern></defs><rect width="8" height="20" fill="url(#dp)"/><rect x="4" width="0.6" height="20" fill="#f0f0f0"/></svg><div style="position:absolute;left:125.3px;top:612.5px;width:3.3px;height:20px;background:#505050;"></div><svg style="position:absolute;left:137px;top:612.5px;" width="15.5" height="16" viewBox="0 0 15.5 16"><rect x="0" y="0" width="15.5" height="16" rx="2.8" fill="#ff991f"/><circle cx="7.75" cy="6.4" r="3.9" fill="#fff"/><path d="M5.9 8.6 H9.6 L9.1 11.4 H6.4 Z" fill="#fff"/><rect x="6.3" y="11.9" width="2.9" height="1.1" fill="#fff"/></svg><div style="position:absolute;left:1059.2px;top:614.5px;width:46px;height:16.5px;background:#4a6382;border-radius:3px"></div><svg style="position:absolute;left:1205.5px;top:615.0px;" width="13" height="13" viewBox="0 0 13 13"><path d="M6.5 1 V12 M0.6 6.5 H12.4" stroke="#6b778c" stroke-width="1.7"/></svg><svg style="position:absolute;left:1224.5px;top:614.5px;" width="14" height="14" viewBox="0 0 14 14"><g transform="rotate(-45 7 7)" fill="none" stroke="#6b778c" stroke-width="1.65" stroke-linecap="round"><path d="M6.6 4.6 H3.6 A2.4 2.4 0 0 0 3.6 9.4 H5.4"/><path d="M7.4 9.4 H10.4 A2.4 2.4 0 0 0 10.4 4.6 H8.6"/><path d="M5.2 7 H8.8"/></g></svg><svg style="position:absolute;left:1240.1px;top:614.0px;" width="15" height="15" viewBox="0 0 15 15"><path d="M7.5 0.6 L14.4 7.5 L7.5 14.4 L0.6 7.5 Z" fill="#ff0000" stroke="#ff0000" stroke-width="0.8" stroke-linejoin="round"/><rect x="6.6" y="3.6" width="1.9" height="5.2" fill="#fff"/><rect x="6.6" y="9.7" width="1.9" height="1.9" fill="#fff"/></svg><svg style="position:absolute;left:1257.2px;top:613.5px;" width="13" height="16" viewBox="0 0 13 16"><path d="M4.3 6.6 H1.3 V14.8 H11.7 V6.6 H8.7" stroke="#6b778c" stroke-width="1.7" fill="none"/><path d="M6.5 10.6 V1.8 M3.4 4.6 L6.5 1.5 L9.6 4.6" stroke="#6b778c" stroke-width="1.7" fill="none"/></svg>
<div class="t" style="left:45.25px;top:8.52px;font-size:21px;line-height:25px;font-weight:400;color:#ffffff;letter-spacing:0.875px;font-family:'Liberation Sans', sans-serif">Jira Software</div><div class="t" style="left:197.20px;top:13.25px;font-size:14.0px;line-height:17px;font-weight:400;color:#deebff;letter-spacing:-0.089px;font-family:'Liberation Sans', sans-serif">Dashboards</div><div class="t" style="left:304.60px;top:13.25px;font-size:14.0px;line-height:17px;font-weight:400;color:#deebff;letter-spacing:-0.086px;font-family:'Liberation Sans', sans-serif">Projects</div><div class="t" style="left:387.26px;top:13.29px;font-size:13.89px;line-height:17px;font-weight:400;color:#deebff;letter-spacing:-0.450px;font-family:'Liberation Sans', sans-serif">Issues</div><div class="t" style="left:458.20px;top:13.25px;font-size:14.0px;line-height:17px;font-weight:400;color:#deebff;letter-spacing:-0.180px;font-family:'Liberation Sans', sans-serif">Boards</div><div class="t" style="left:535.65px;top:13.31px;font-size:13.83px;line-height:17px;font-weight:400;color:#deebff;letter-spacing:-0.450px;font-family:'Liberation Sans', sans-serif">Tests</div><div class="t" style="left:613.05px;top:12.95px;font-size:14.0px;line-height:17px;font-weight:400;color:#ffffff;letter-spacing:-0.070px;font-family:'Liberation Sans', sans-serif;-webkit-text-stroke:0.45px #ffffff">Create</div><div class="t" style="left:962.55px;top:12.95px;font-size:14.0px;line-height:17px;font-weight:400;color:#b3bac5;letter-spacing:-0.310px;font-family:'Liberation Sans', sans-serif">Search</div><div class="t" style="left:68.50px;top:50.85px;font-size:14.0px;line-height:17px;font-weight:400;color:#0052cc;letter-spacing:0.141px;font-family:'Liberation Sans', sans-serif;-webkit-text-stroke:0.45px #0052cc">Requirements</div><div class="t" style="left:176.40px;top:50.85px;font-size:14.0px;line-height:17px;font-weight:400;color:#42526e;letter-spacing:-0.179px;font-family:'Liberation Sans', sans-serif;-webkit-text-stroke:0.45px #42526e">Baseline</div><div class="t" style="left:79.55px;top:112.65px;font-size:14.0px;line-height:17px;font-weight:400;color:#42526e;letter-spacing:-0.227px;font-family:'Liberation Sans', sans-serif">Create Suite</div><div class="t" style="left:181.00px;top:112.65px;font-size:14.0px;line-height:17px;font-weight:400;color:#42526e;letter-spacing:0.111px;font-family:'Liberation Sans', sans-serif">Export All</div><div class="t" style="left:266.75px;top:112.65px;font-size:14.0px;line-height:17px;font-weight:400;color:#42526e;letter-spacing:0.640px;font-family:'Liberation Sans', sans-serif">Import</div><div class="t" style="left:517.45px;top:112.65px;font-size:14.0px;line-height:17px;font-weight:400;color:#33405e;letter-spacing:0.133px;font-family:'Liberation Sans', sans-serif">Sprint:</div><div class="t" style="left:729.60px;top:112.65px;font-size:14.0px;line-height:17px;font-weight:400;color:#33405e;letter-spacing:-0.145px;font-family:'Liberation Sans', sans-serif">Fix Version:</div><div class="t" style="left:952.05px;top:112.65px;font-size:14.0px;line-height:17px;font-weight:400;color:#33405e;letter-spacing:0.172px;font-family:'Liberation Sans', sans-serif">Component:</div><div class="t" style="left:1219.00px;top:112.65px;font-size:14.0px;line-height:17px;font-weight:400;color:#42526e;letter-spacing:0.025px;font-family:'Liberation Sans', sans-serif">Filters</div><div class="t" style="left:153.40px;top:154.95px;font-size:14.0px;line-height:17px;font-weight:400;color:#33405e;letter-spacing:-0.212px;font-family:'Liberation Sans', sans-serif">1.0 v1.0 - In Progress</div><div class="t" style="left:157.00px;top:189.73px;font-size:12.6px;line-height:15px;font-weight:400;color:#33405e;letter-spacing:-0.537px;font-family:'Liberation Sans', sans-serif">1.1</div><div class="t" style="left:198.29px;top:189.69px;font-size:12.72px;line-height:15px;font-weight:400;color:#0052cc;letter-spacing:-0.450px;font-family:'Liberation Sans', sans-serif">FRS-1</div><div class="t" style="left:237.30px;top:188.25px;font-size:14.0px;line-height:17px;font-weight:400;color:#33405e;letter-spacing:-0.304px;font-family:'Liberation Sans', sans-serif">Purchase Ticket</div><div class="t" style="left:151.00px;top:208.46px;font-size:13.98px;line-height:17px;font-weight:400;color:#33405e;letter-spacing:-0.450px;font-family:'Liberation Sans', sans-serif">FRS Sprint 84</div><div class="t" style="left:255.50px;top:208.45px;font-size:14.0px;line-height:17px;font-weight:400;color:#33405e;letter-spacing:-0.220px;font-family:'Liberation Sans', sans-serif">Version 1.0</div><div class="t" style="left:343.50px;top:208.45px;font-size:14.0px;line-height:17px;font-weight:400;color:#33405e;letter-spacing:-0.304px;font-family:'Liberation Sans', sans-serif">Purchase Ticket</div><div class="t" style="left:1066.00px;top:189.69px;font-size:11.0px;line-height:13px;font-weight:700;color:#ffffff;letter-spacing:-0.312px;font-family:'Liberation Sans', sans-serif">TO DO</div><div class="t" style="left:177.07px;top:242.61px;font-size:12.96px;line-height:16px;font-weight:400;color:#33405e;letter-spacing:-0.450px;font-family:'Liberation Sans', sans-serif">1.1.1</div><div class="t" style="left:228.88px;top:242.62px;font-size:12.93px;line-height:16px;font-weight:400;color:#0052cc;letter-spacing:-0.450px;font-family:'Liberation Sans', sans-serif">FRS-2</div><div class="t" style="left:267.55px;top:241.75px;font-size:14.0px;line-height:17px;font-weight:400;color:#33405e;letter-spacing:0.021px;font-family:'Liberation Sans', sans-serif">Credit Card Validation</div><div class="t" style="left:171.00px;top:261.96px;font-size:13.98px;line-height:17px;font-weight:400;color:#33405e;letter-spacing:-0.450px;font-family:'Liberation Sans', sans-serif">FRS Sprint 84</div><div class="t" style="left:275.50px;top:261.95px;font-size:14.0px;line-height:17px;font-weight:400;color:#33405e;letter-spacing:-0.220px;font-family:'Liberation Sans', sans-serif">Version 1.0</div><div class="t" style="left:363.50px;top:261.95px;font-size:14.0px;line-height:17px;font-weight:400;color:#33405e;letter-spacing:-0.304px;font-family:'Liberation Sans', sans-serif">Purchase Ticket</div><div class="t" style="left:1066.00px;top:243.19px;font-size:11.0px;line-height:13px;font-weight:700;color:#ffffff;letter-spacing:-0.312px;font-family:'Liberation Sans', sans-serif">TO DO</div><div class="t" style="left:196.53px;top:295.91px;font-size:13.54px;line-height:16px;font-weight:400;color:#33405e;letter-spacing:-0.450px;font-family:'Liberation Sans', sans-serif">1.1.1.1</div><div class="t" style="left:258.97px;top:296.07px;font-size:13.07px;line-height:16px;font-weight:400;color:#0052cc;letter-spacing:-0.450px;font-family:'Liberation Sans', sans-serif">FRS-3</div><div class="t" style="left:299.30px;top:295.25px;font-size:14.0px;line-height:17px;font-weight:400;color:#33405e;letter-spacing:-0.250px;font-family:'Liberation Sans', sans-serif">Valid Bank</div><div class="t" style="left:191.00px;top:315.46px;font-size:13.98px;line-height:17px;font-weight:400;color:#33405e;letter-spacing:-0.450px;font-family:'Liberation Sans', sans-serif">FRS Sprint 84</div><div class="t" style="left:295.50px;top:315.45px;font-size:14.0px;line-height:17px;font-weight:400;color:#33405e;letter-spacing:-0.220px;font-family:'Liberation Sans', sans-serif">Version 1.0</div><div class="t" style="left:383.50px;top:315.45px;font-size:14.0px;line-height:17px;font-weight:400;color:#33405e;letter-spacing:-0.325px;font-family:'Liberation Sans', sans-serif">Purchase Ticket</div><div class="t" style="left:1068.50px;top:296.69px;font-size:11.0px;line-height:13px;font-weight:700;color:#ffffff;letter-spacing:-0.312px;font-family:'Liberation Sans', sans-serif">TO DO</div><div class="t" style="left:196.53px;top:349.41px;font-size:13.54px;line-height:16px;font-weight:400;color:#33405e;letter-spacing:-0.450px;font-family:'Liberation Sans', sans-serif">1.1.1.2</div><div class="t" style="left:258.97px;top:349.60px;font-size:12.98px;line-height:16px;font-weight:400;color:#0052cc;letter-spacing:-0.450px;font-family:'Liberation Sans', sans-serif">FRS-4</div><div class="t" style="left:299.30px;top:348.75px;font-size:14.0px;line-height:17px;font-weight:400;color:#33405e;letter-spacing:-0.150px;font-family:'Liberation Sans', sans-serif">Valid Card Owner</div><div class="t" style="left:191.00px;top:368.96px;font-size:13.98px;line-height:17px;font-weight:400;color:#33405e;letter-spacing:-0.450px;font-family:'Liberation Sans', sans-serif">FRS Sprint 84</div><div class="t" style="left:295.50px;top:368.95px;font-size:14.0px;line-height:17px;font-weight:400;color:#33405e;letter-spacing:-0.220px;font-family:'Liberation Sans', sans-serif">Version 1.0</div><div class="t" style="left:383.50px;top:368.95px;font-size:14.0px;line-height:17px;font-weight:400;color:#33405e;letter-spacing:-0.325px;font-family:'Liberation Sans', sans-serif">Purchase Ticket</div><div class="t" style="left:1068.50px;top:350.19px;font-size:11.0px;line-height:13px;font-weight:700;color:#ffffff;letter-spacing:-0.312px;font-family:'Liberation Sans', sans-serif">TO DO</div><div class="t" style="left:176.31px;top:402.30px;font-size:13.86px;line-height:17px;font-weight:400;color:#33405e;letter-spacing:-0.450px;font-family:'Liberation Sans', sans-serif">1.1.2</div><div class="t" style="left:228.77px;top:403.11px;font-size:12.96px;line-height:16px;font-weight:400;color:#0052cc;letter-spacing:-0.450px;font-family:'Liberation Sans', sans-serif">FRS-5</div><div class="t" style="left:268.10px;top:402.25px;font-size:14.0px;line-height:17px;font-weight:400;color:#33405e;letter-spacing:-0.035px;font-family:'Liberation Sans', sans-serif">Passenger Information Validation</div><div class="t" style="left:171.00px;top:422.46px;font-size:13.98px;line-height:17px;font-weight:400;color:#33405e;letter-spacing:-0.450px;font-family:'Liberation Sans', sans-serif">FRS Sprint 84</div><div class="t" style="left:275.50px;top:422.45px;font-size:14.0px;line-height:17px;font-weight:400;color:#33405e;letter-spacing:-0.220px;font-family:'Liberation Sans', sans-serif">Version 2.0</div><div class="t" style="left:363.50px;top:422.45px;font-size:14.0px;line-height:17px;font-weight:400;color:#33405e;letter-spacing:-0.304px;font-family:'Liberation Sans', sans-serif">Purchase Ticket</div><div class="t" style="left:1066.00px;top:403.69px;font-size:11.0px;line-height:13px;font-weight:700;color:#ffffff;letter-spacing:-0.312px;font-family:'Liberation Sans', sans-serif">TO DO</div><div class="t" style="left:156.22px;top:456.35px;font-size:13.72px;line-height:16px;font-weight:400;color:#33405e;letter-spacing:-0.450px;font-family:'Liberation Sans', sans-serif">1.2</div><div class="t" style="left:198.26px;top:456.55px;font-size:13.14px;line-height:16px;font-weight:400;color:#0052cc;letter-spacing:-0.450px;font-family:'Liberation Sans', sans-serif">FRS-8</div><div class="t" style="left:237.45px;top:455.75px;font-size:14.0px;line-height:17px;font-weight:400;color:#33405e;letter-spacing:-0.242px;font-family:'Liberation Sans', sans-serif">Search Flights</div><div class="t" style="left:151.00px;top:475.96px;font-size:13.98px;line-height:17px;font-weight:400;color:#33405e;letter-spacing:-0.450px;font-family:'Liberation Sans', sans-serif">FRS Sprint 85</div><div class="t" style="left:255.50px;top:475.95px;font-size:14.0px;line-height:17px;font-weight:400;color:#33405e;letter-spacing:-0.220px;font-family:'Liberation Sans', sans-serif">Version 1.0</div><div class="t" style="left:343.75px;top:475.95px;font-size:14.0px;line-height:17px;font-weight:400;color:#33405e;letter-spacing:-0.242px;font-family:'Liberation Sans', sans-serif">Search Flights</div><div class="t" style="left:1066.00px;top:457.19px;font-size:11.0px;line-height:13px;font-weight:700;color:#ffffff;letter-spacing:-0.312px;font-family:'Liberation Sans', sans-serif">TO DO</div><div class="t" style="left:152.55px;top:512.45px;font-size:14.0px;line-height:17px;font-weight:400;color:#33405e;letter-spacing:-0.216px;font-family:'Liberation Sans', sans-serif">2.0 v2.0 - Backlog (Need Review)</div><div class="t" style="left:152.80px;top:548.45px;font-size:14.0px;line-height:17px;font-weight:400;color:#33405e;letter-spacing:-0.191px;font-family:'Liberation Sans', sans-serif">3.0 Requirement Suite 1X</div><div class="t" style="left:78.55px;top:580.96px;font-size:16.0px;line-height:19px;font-weight:400;color:#33405e;letter-spacing:0.167px;font-family:'Liberation Sans', sans-serif;-webkit-text-stroke:0.45px #33405e">Uncategorized</div><div class="t" style="left:155.64px;top:615.65px;font-size:13.42px;line-height:16px;font-weight:400;color:#0052cc;letter-spacing:-0.450px;font-family:'Liberation Sans', sans-serif">FRS-34</div><div class="t" style="left:204.00px;top:614.95px;font-size:14.0px;line-height:17px;font-weight:400;color:#33405e;letter-spacing:-0.255px;font-family:'Liberation Sans', sans-serif">v3.0 - Develop Feature A (TBD)</div><div class="t" style="left:1066.00px;top:616.79px;font-size:11.0px;line-height:13px;font-weight:700;color:#ffffff;letter-spacing:-0.312px;font-family:'Liberation Sans', sans-serif">TO DO</div>
<div style="position:absolute;left:151.5px;top:181.9px;width:25.80000000000001px;height:24.400000000000006px;border:2.4px solid #e53935;box-sizing:border-box"></div><div style="position:absolute;left:170.2px;top:228.5px;width:38.30000000000001px;height:33.5px;border:2.4px solid #e53935;box-sizing:border-box"></div><div style="position:absolute;left:192.3px;top:282.5px;width:48.89999999999998px;height:88.0px;border:2.4px solid #e53935;box-sizing:border-box"></div><svg style="position:absolute;left:200px;top:145px;" width="170" height="105" viewBox="0 0 170 105"><path d="M161.4 7.3 L16.5 90.5" stroke="#ff0000" stroke-width="3"/><path d="M9.1 94.8 L18.6 95.2 L13.4 86.2 Z" fill="#ff0000" stroke="#ff0000" stroke-width="1" stroke-linejoin="round"/></svg>
</body></html>
